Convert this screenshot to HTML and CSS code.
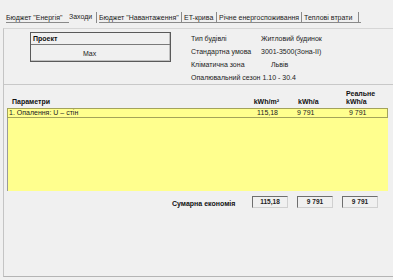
FILE: index.html
```html
<!DOCTYPE html>
<html lang="uk">
<head>
    <meta charset="UTF-8">
    <title>Заходи</title>
    <link rel="stylesheet" href="styles.css">
</head>
<body>
    <div class="tabs">
        <div class="tab t1">Бюджет "Енергія"</div>
        <div class="tab t2 active">Заходи</div>
        <div class="tab t3">Бюджет "Навантаження"</div>
        <div class="tab t4">ET-крива</div>
        <div class="tab t5">Річне енергоспоживання</div>
        <div class="tab t6">Теплові втрати</div>
    </div>

    <div class="panel">
        <div class="top">
            <div class="project">
                <div class="project-head">Проект</div>
                <div class="project-name">Max</div>
            </div>
            <div class="info">
                <div class="info-row"><span class="info-label">Тип будівлі</span><span>Житловий будинок</span></div>
                <div class="info-row"><span class="info-label">Стандартна умова</span><span>3001-3500(Зона-II)</span></div>
                <div class="info-row"><span class="info-label">Кліматична зона</span><span class="shift">Львів</span></div>
                <div class="info-row">Опалювальний сезон 1.10 - 30.4</div>
            </div>
        </div>

        <div class="table">
            <div class="thead">
                <div class="col-name">Параметри</div>
                <div class="col-num c1">kWh/m²</div>
                <div class="col-num c2">kWh/a</div>
                <div class="col-num c3">Реальне<br>kWh/a</div>
            </div>
            <div class="tbody">
                <div class="trow">
                    <div class="col-name">1. Опалення: U – стін</div>
                    <div class="col-num c1">115,18</div>
                    <div class="col-num c2">9 791</div>
                    <div class="col-num c3">9 791</div>
                </div>
            </div>
        </div>

        <div class="summary">
            <div class="summary-label">Сумарна економія</div>
            <div class="sum-box">115,18</div>
            <div class="sum-box">9 791</div>
            <div class="sum-box">9 791</div>
        </div>
    </div>
</body>
</html>
```

FILE: styles.css
```css
body {
    margin: 0;
    background-color: #f0f0f0;
    font-family: "Liberation Sans", Arial, sans-serif;
    font-size: 7px;
    color: #222;
    width: 393px;
    height: 280px;
    overflow: hidden;
}

/* tab strip */
.tabs {
    display: flex;
    align-items: flex-start;
    padding: 12px 0 0 6px;
    height: 28px;
    box-sizing: border-box;
}

.tab {
    height: 11px;
    line-height: 11px;
    border-bottom: 1px solid #8a8a8a;
    white-space: nowrap;
    box-sizing: border-box;
    position: relative;
}

.tab::after {
    content: "";
    position: absolute;
    right: 2px;
    top: 0;
    height: 11px;
    border-right: 1px solid #8a8a8a;
}

.t1 { width: 63px; }
.t2 { width: 30px; }
.t3 { width: 85px; }
.t4 { width: 35px; }
.t5 { width: 85px; }
.t6 { width: 57px; }

.t1::after {
    display: none;
}

.tab.active {
    border-bottom: none;
    line-height: 9px;
}

/* main panel */
.panel {
    margin-left: 3px;
    border-left: 1px solid #c4c4c4;
    border-top: 1px solid #d6d6d6;
    border-bottom: 1px solid #b4b4b4;
    height: 249px;
    box-sizing: border-box;
}

.top {
    display: flex;
    height: 55px;
    border-bottom: 1px solid #c8c8c8;
}

.project {
    margin: 3px 0 0 26px;
    width: 141px;
    height: 30px;
    border: 1px solid #5a5a5a;
    box-shadow: inset -1px -1px 0 #c0c0c0;
    box-sizing: border-box;
}

.project-head {
    height: 11px;
    line-height: 11px;
    padding-left: 2px;
    font-weight: bold;
    color: #111;
    border-bottom: 1px solid #7a7a7a;
}

.project-name {
    line-height: 17px;
    padding-left: 52px;
}

.info {
    margin: 3px 0 0 20px;
}

.info-row {
    height: 13px;
    line-height: 13px;
    white-space: nowrap;
}

.info-label {
    display: inline-block;
    width: 70px;
}

.shift {
    padding-left: 10px;
}

/* table */
.table {
    margin-left: 3px;
    width: 381px;
}

.thead {
    display: flex;
    align-items: flex-end;
    height: 23px;
    padding-bottom: 2px;
    line-height: 8px;
    font-weight: bold;
    color: #111;
    box-sizing: border-box;
}

.thead .col-name {
    padding-left: 5px;
}

.col-name {
    flex: 1;
    white-space: nowrap;
}

.col-num {
    white-space: nowrap;
    box-sizing: border-box;
}

.c1 {
    width: 40px;
    text-align: right;
}

.c2 {
    width: 67px;
    padding-left: 19px;
}

.c3 {
    width: 42px;
}

.tbody {
    background-color: #ffff8e;
    height: 83px;
    border-left: 1px solid #9a9a9a;
    box-sizing: border-box;
}

.trow {
    display: flex;
    height: 10px;
    line-height: 8px;
    border: 1px solid #a3a35a;
    margin-left: -1px;
    box-sizing: border-box;
}

.trow .col-name {
    padding-left: 1px;
}

.trow .c3 {
    padding-left: 4px;
}

/* totals */
.summary {
    display: flex;
    align-items: flex-start;
    margin: 5px 0 0 168px;
}

.summary-label {
    width: 80px;
    padding-top: 4px;
    line-height: 8px;
    font-weight: bold;
    color: #111;
}

.sum-box {
    width: 36px;
    height: 12px;
    line-height: 9px;
    text-align: center;
    font-weight: bold;
    font-size: 6.5px;
    border-top: 1px solid #6e6e6e;
    border-left: 1px solid #6e6e6e;
    border-right: 1px solid #d0d0d0;
    border-bottom: 1px solid #d0d0d0;
    margin-right: 9px;
    box-sizing: border-box;
}
```
